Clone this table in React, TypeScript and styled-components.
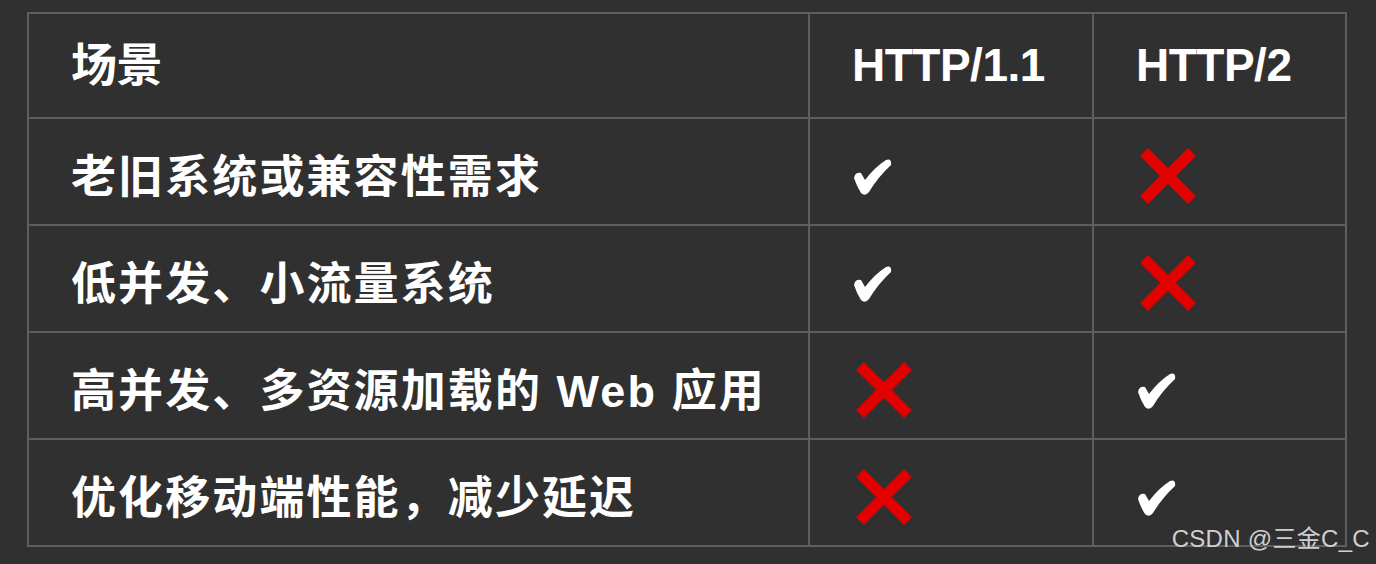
import React from 'react';
import styled, { createGlobalStyle } from 'styled-components';

const GlobalStyle = createGlobalStyle`
  html, body {
    margin: 0;
    padding: 0;
    background: #303030;
  }
`;

const Page = styled.div`
  position: relative;
  width: 1376px;
  height: 564px;
  padding: 12px 0 0 27px;
  box-sizing: border-box;
  background: #303030;
  font-family: 'Liberation Sans', 'Noto Sans CJK SC', sans-serif;
  overflow: hidden;
`;

const Table = styled.table`
  border-collapse: collapse;
  table-layout: fixed;
  width: 1318px;
  border: 2px solid #5e5e5e;
`;

const Col = styled.col<{ $w: number }>`
  width: ${(p) => p.$w}px;
`;

const Th = styled.th`
  height: 105px;
  padding: 0 0 2px 42px;
  box-sizing: border-box;
  border: 2px solid #5e5e5e;
  text-align: left;
  color: #fff;
  font-size: 46px;
  font-weight: 700;
  letter-spacing: -0.5px;
  line-height: 1;
`;

const Td = styled.td`
  height: 107px;
  padding: 12px 0 0 42px;
  box-sizing: border-box;
  border: 2px solid #5e5e5e;
  color: #fff;
  font-size: 45px;
  font-weight: 700;
  letter-spacing: 2.1px;
  line-height: 1;
  vertical-align: middle;
`;

const Mark = styled.span<{ $ok: boolean }>`
  display: inline-flex;
  margin-left: ${(p) => (p.$ok ? '1px' : '4px')};
  margin-top: ${(p) => (p.$ok ? '-8px' : '-4px')};
  vertical-align: middle;
`;

const Watermark = styled.div`
  position: absolute;
  right: 6px;
  bottom: 10px;
  color: #cfcfcf;
  font-family: 'Liberation Sans', 'Noto Sans CJK SC', sans-serif;
  font-size: 24px;
  letter-spacing: 0.3px;
`;

function Check() {
  return (
    <svg width="40" height="37" viewBox="0 0 40 37">
      <path
        d="M1 19 Q2 13 8 14 L12 21 Q22 8 33 1 Q39 -1 38 6 Q25 18 16 33 Q12 38 8 34 Q4 28 1 19 Z"
        fill="#fff"
      />
    </svg>
  );
}

function Cross() {
  return (
    <svg width="56" height="56" viewBox="0 0 56 56">
      <g stroke="#e30000" strokeWidth="11">
        <line x1="4" y1="4" x2="52" y2="52" />
        <line x1="52" y1="4" x2="4" y2="52" />
      </g>
    </svg>
  );
}

const rows: { scene: string; h1: boolean; h2: boolean }[] = [
  { scene: '老旧系统或兼容性需求', h1: true, h2: false },
  { scene: '低并发、小流量系统', h1: true, h2: false },
  { scene: '高并发、多资源加载的 Web 应用', h1: false, h2: true },
  { scene: '优化移动端性能，减少延迟', h1: false, h2: true },
];

function Cell({ ok }: { ok: boolean }) {
  return <Mark $ok={ok}>{ok ? <Check /> : <Cross />}</Mark>;
}

export default function App() {
  return (
    <Page>
      <GlobalStyle />
      <Table>
        <colgroup>
          <Col $w={781} />
          <Col $w={284} />
          <Col $w={253} />
        </colgroup>
        <thead>
          <tr>
            <Th>场景</Th>
            <Th>HTTP/1.1</Th>
            <Th>HTTP/2</Th>
          </tr>
        </thead>
        <tbody>
          {rows.map((r) => (
            <tr key={r.scene}>
              <Td>{r.scene}</Td>
              <Td>
                <Cell ok={r.h1} />
              </Td>
              <Td>
                <Cell ok={r.h2} />
              </Td>
            </tr>
          ))}
        </tbody>
      </Table>
      <Watermark>CSDN @三金C_C</Watermark>
    </Page>
  );
}
